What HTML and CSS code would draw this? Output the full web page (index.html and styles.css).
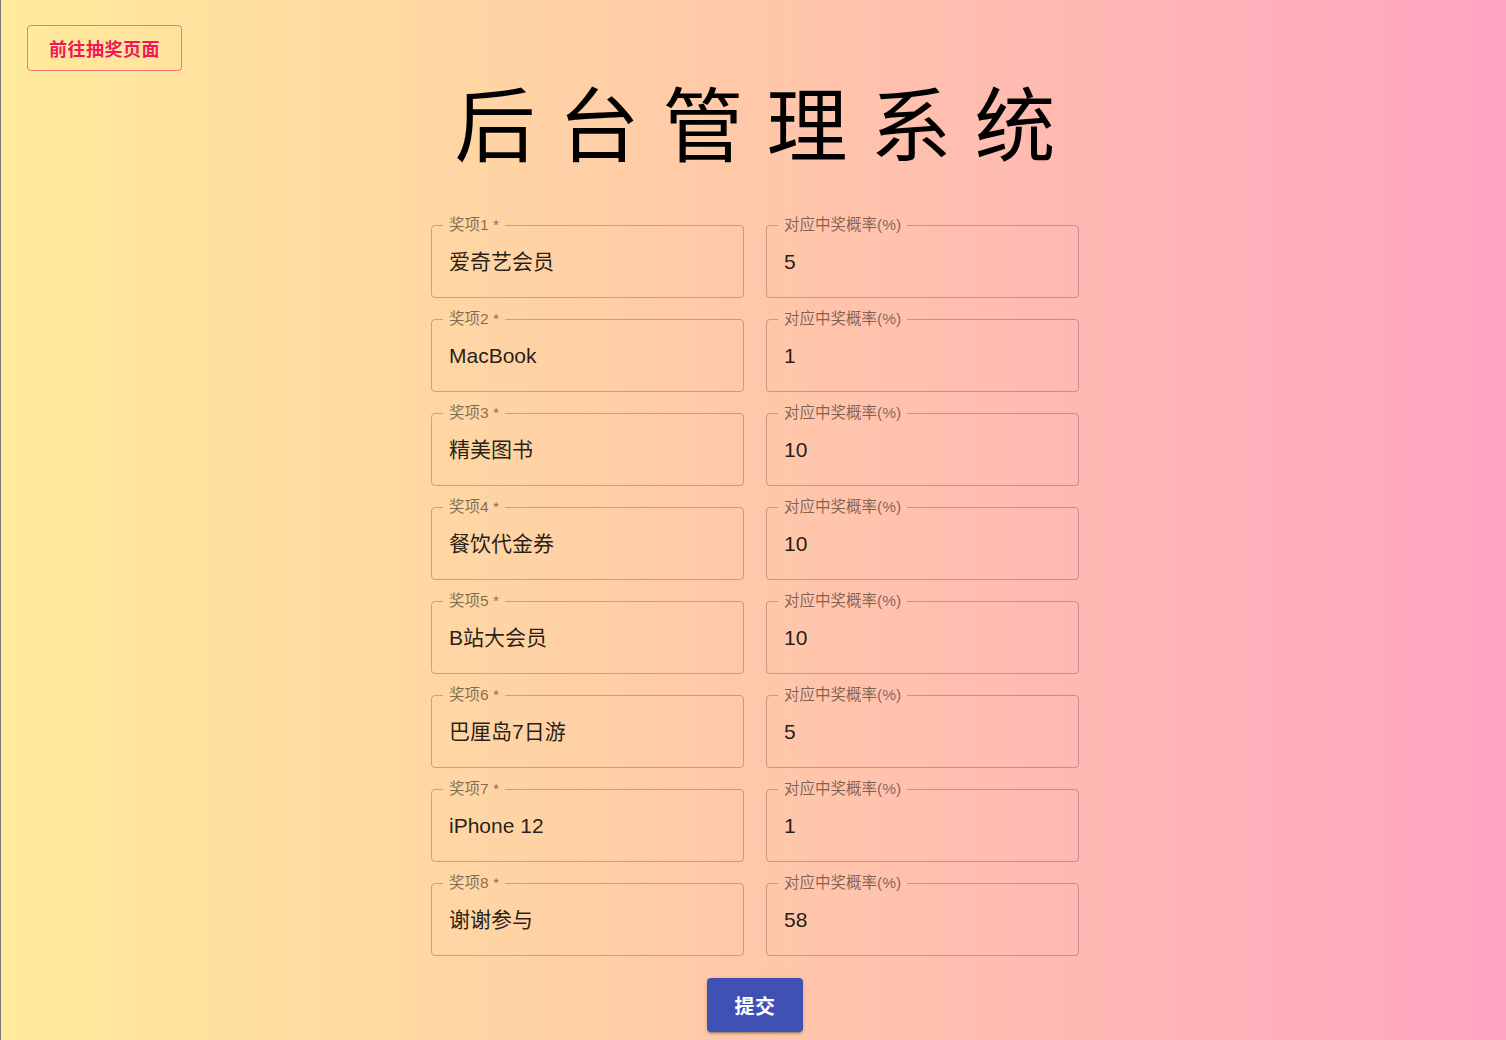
FILE: index.html
```html
<!DOCTYPE html>
<html lang="zh-CN">
<head>
<meta charset="utf-8">
<title>后台管理系统</title>
<link rel="stylesheet" href="styles.css">
</head>
<body>
<div class="page">
  <div class="topbar">
    <button class="link-btn" type="button">前往抽奖页面</button>
  </div>
  <h1 class="title">后台管理系统</h1>
  <form class="form">
    <div class="grid">
      <fieldset class="field"><legend>奖项1 *</legend><div class="value">爱奇艺会员</div></fieldset>
      <fieldset class="field"><legend>对应中奖概率(%)</legend><div class="value">5</div></fieldset>
      <fieldset class="field"><legend>奖项2 *</legend><div class="value">MacBook</div></fieldset>
      <fieldset class="field"><legend>对应中奖概率(%)</legend><div class="value">1</div></fieldset>
      <fieldset class="field"><legend>奖项3 *</legend><div class="value">精美图书</div></fieldset>
      <fieldset class="field"><legend>对应中奖概率(%)</legend><div class="value">10</div></fieldset>
      <fieldset class="field"><legend>奖项4 *</legend><div class="value">餐饮代金券</div></fieldset>
      <fieldset class="field"><legend>对应中奖概率(%)</legend><div class="value">10</div></fieldset>
      <fieldset class="field"><legend>奖项5 *</legend><div class="value">B站大会员</div></fieldset>
      <fieldset class="field"><legend>对应中奖概率(%)</legend><div class="value">10</div></fieldset>
      <fieldset class="field"><legend>奖项6 *</legend><div class="value">巴厘岛7日游</div></fieldset>
      <fieldset class="field"><legend>对应中奖概率(%)</legend><div class="value">5</div></fieldset>
      <fieldset class="field"><legend>奖项7 *</legend><div class="value">iPhone 12</div></fieldset>
      <fieldset class="field"><legend>对应中奖概率(%)</legend><div class="value">1</div></fieldset>
      <fieldset class="field"><legend>奖项8 *</legend><div class="value">谢谢参与</div></fieldset>
      <fieldset class="field"><legend>对应中奖概率(%)</legend><div class="value">58</div></fieldset>
    </div>
    <div class="actions">
      <button class="submit-btn" type="button">提交</button>
    </div>
  </form>
</div>
</body>
</html>
```
FILE: styles.css
```css
html, body {
  margin: 0;
  padding: 0;
  height: 100%;
}
body {
  font-family: "Liberation Sans", "Noto Sans CJK SC", sans-serif;
  background: linear-gradient(90deg, #ffeb9b 0%, #ffc8a9 50%, #ffa4c2 100%);
  border-left: 1px solid #7a7a72;
  box-sizing: border-box;
  overflow: hidden;
}
.page {
  min-height: 100%;
  padding-left: 3px;
}
.topbar {
  padding: 25px 0 0 23px;
  display: flex;
}
.link-btn {
  height: 46px;
  padding: 0 21px;
  border: 1px solid rgba(245, 0, 87, 0.5);
  border-radius: 4px;
  background: transparent;
  color: #f0185a;
  font-family: "Noto Sans CJK SC", sans-serif;
  font-size: 18px;
  font-weight: 700;
  letter-spacing: 0.5px;
  cursor: pointer;
}
.title {
  margin: 9px 0 0 0;
  text-align: center;
  font-family: "Noto Sans CJK SC", sans-serif;
  font-weight: 400;
  font-size: 81px;
  line-height: 80px;
  letter-spacing: 23px;
  padding-left: 23px;
  color: #000;
}
.form {
  width: 648px;
  margin: 58px auto 0;
}
.grid {
  display: grid;
  grid-template-columns: 313px 313px;
  column-gap: 22px;
  row-gap: 14px;
}
.field {
  margin: 0;
  height: 80px;
  box-sizing: border-box;
  padding: 0 17px;
  border: 1px solid rgba(0, 0, 0, 0.23);
  border-radius: 4px;
  min-width: 0;
}
.field legend {
  margin-left: -6px;
  padding: 0 6px;
  font-family: "Liberation Sans", "Noto Sans CJK SC", sans-serif;
  font-size: 15.5px;
  line-height: 15px;
  color: rgba(0, 0, 0, 0.5);
  position: relative;
  top: -1px;
}
.value {
  height: 56px;
  line-height: 58px;
  font-size: 21px;
  color: rgba(0, 0, 0, 0.87);
  white-space: nowrap;
}
.actions {
  display: flex;
  justify-content: center;
  margin-top: 22px;
}
.submit-btn {
  width: 96px;
  height: 54px;
  border: none;
  border-radius: 4px;
  background: #3f51b5;
  color: #fff;
  font-family: "Noto Sans CJK SC", sans-serif;
  font-size: 20px;
  font-weight: 700;
  letter-spacing: 0.5px;
  box-shadow: 0 3px 1px -2px rgba(0,0,0,0.2), 0 2px 2px 0 rgba(0,0,0,0.14), 0 1px 5px 0 rgba(0,0,0,0.12);
  cursor: pointer;
}
```
